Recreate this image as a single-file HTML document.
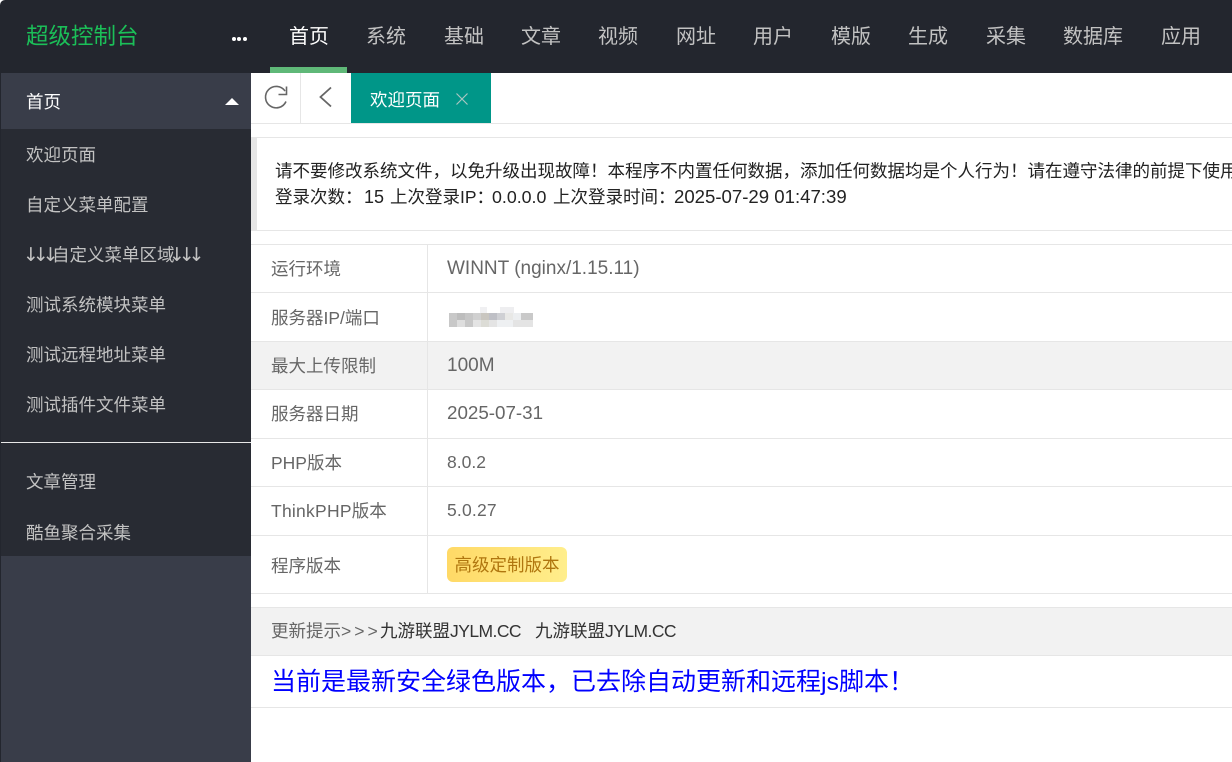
<!DOCTYPE html>
<html lang="zh-CN"><head><meta charset="utf-8"><title>超级控制台</title>
<style>
*{margin:0;padding:0;box-sizing:border-box}
html,body{width:1232px;height:762px;overflow:hidden;background:#fff}
body{font-family:"Liberation Sans","Noto Sans CJK SC",sans-serif;position:relative;font-size:17.5px}
.a{position:absolute;white-space:nowrap}
.bg{position:absolute}
.nav{position:absolute;top:1px;height:73px;line-height:72px;font-size:20px;color:#c2c2c2;white-space:nowrap}
.m{position:absolute;left:26px;font-size:17.5px;color:#c2c2c2;line-height:50px;height:50px;white-space:nowrap}
.hl{position:absolute;left:251px;width:981px;height:1px;background:#e6e6e6}
.l{position:absolute;left:271px;color:#666;white-space:nowrap;font-size:17.5px;line-height:26px}
.v{position:absolute;left:447px;color:#666;white-space:nowrap;font-size:17.5px;line-height:26px}
.n{position:absolute;color:#222;line-height:26px;font-size:17.5px;white-space:nowrap}
.ar{position:absolute;top:0;font-family:"DejaVu Sans",sans-serif;font-size:19px;letter-spacing:-6.1px}
</style></head><body>
<div class="bg" style="left:0;top:0;width:1232px;height:73px;background:#23262e"></div>
<div class="bg" style="left:1px;top:73px;width:250px;height:689px;background:#393d49"></div>
<div class="bg" style="left:0;top:0;width:1px;height:762px;background:#23262e"></div>
<div class="bg" style="left:1px;top:129px;width:250px;height:427px;background:#282b33"></div>
<div class="bg" style="left:1px;top:442px;width:250px;height:1px;background:#e8e8e8"></div>
<svg class="bg" style="left:0;top:0" width="5" height="5"><path d="M0 0H5A5 5 0 0 0 0 5Z" fill="#fff"/></svg>

<div class="a" style="left:26px;top:20px;font-size:22.5px;line-height:34px;color:#1bbf58">超级控制台</div>
<div class="bg" style="left:231.500px;top:37px;width:4px;height:4px;border-radius:50%;background:#fff"></div>
<div class="bg" style="left:237px;top:37px;width:4px;height:4px;border-radius:50%;background:#fff"></div>
<div class="bg" style="left:242.500px;top:37px;width:4px;height:4px;border-radius:50%;background:#fff"></div>

<div class="nav" style="left:289px;color:#fff">首页</div>
<div class="nav" style="left:366px">系统</div>
<div class="nav" style="left:444px">基础</div>
<div class="nav" style="left:521px">文章</div>
<div class="nav" style="left:598px">视频</div>
<div class="nav" style="left:676px">网址</div>
<div class="nav" style="left:753px">用户</div>
<div class="nav" style="left:831px">模版</div>
<div class="nav" style="left:908px">生成</div>
<div class="nav" style="left:986px">采集</div>
<div class="nav" style="left:1063px">数据库</div>
<div class="nav" style="left:1161px">应用</div>
<div class="bg" style="left:270px;top:67px;width:77px;height:6px;background:#5fb878"></div>

<div class="m" style="top:77px;color:#fff">首页</div>
<div class="bg" style="left:225px;top:98px;width:0;height:0;border-left:7px solid transparent;border-right:7px solid transparent;border-bottom:7px solid #fff"></div>
<div class="m" style="top:130px">欢迎页面</div>
<div class="m" style="top:180px">自定义菜单配置</div>
<div class="m" style="top:230px;width:180px"><span class="ar" style="left:-3px">↓↓↓</span><span style="position:absolute;left:26px;top:0">自定义菜单区域</span><span class="ar" style="left:143px">↓↓↓</span></div>
<div class="m" style="top:280px">测试系统模块菜单</div>
<div class="m" style="top:330px">测试远程地址菜单</div>
<div class="m" style="top:380px">测试插件文件菜单</div>
<div class="m" style="top:457px">文章管理</div>
<div class="m" style="top:508px">酷鱼聚合采集</div>

<div class="bg" style="left:300px;top:73px;width:1px;height:50px;background:#e6e6e6"></div>
<div class="bg" style="left:251px;top:123px;width:981px;height:1px;background:#e6e6e6"></div>
<svg class="bg" style="left:251px;top:73px" width="100" height="50" viewBox="0 0 100 50" fill="none" stroke="#666" stroke-width="1.6">
<path d="M34 18A10.700 10.700 0 1 0 35 28.500"/><path d="M35.500 13.500V21.500H27.500"/>
<path d="M80 14.500L69.500 24L80 33.500" stroke-width="1.800"/></svg>
<div class="bg" style="left:351px;top:73px;width:140px;height:50px;background:#009688"></div>
<div class="a" style="left:370px;top:87px;color:#fff;line-height:26px">欢迎页面</div>
<svg class="bg" style="left:455px;top:92px" width="14" height="14" fill="none" stroke="#a8c6c1" stroke-width="1.200"><path d="M1.500 1.500L12.500 12.500M12.500 1.500L1.500 12.500"/></svg>

<div class="hl" style="top:137px"></div>
<div class="bg" style="left:251px;top:137px;width:6px;height:94px;background:#e6e6e6"></div>
<div class="hl" style="top:230px"></div>
<div class="n" style="left:275px;top:158px">请不要修改系统文件，以免升级出现故障！本程序不内置任何数据，添加任何数据均是个人行为！请在遵守法律的前提下使用本</div>
<div class="n" style="left:275px;top:184px">登录次数：</div>
<div class="n" style="left:364px;top:184px;font-size:18px">15</div>
<div class="n" style="left:390px;top:184px">上次登录IP：</div>
<div class="n" style="left:492px;top:184px;font-size:17.800px">0.0.0.0</div>
<div class="n" style="left:553px;top:184px">上次登录时间：</div>
<div class="n" style="left:674px;top:184px;font-size:18.600px">2025-07-29 01:47:39</div>

<div class="bg" style="left:251px;top:342px;width:981px;height:47px;background:#f2f2f2"></div>
<div class="hl" style="top:244px"></div>
<div class="hl" style="top:292px"></div>
<div class="hl" style="top:341px"></div>
<div class="hl" style="top:389px"></div>
<div class="hl" style="top:438px"></div>
<div class="hl" style="top:486px"></div>
<div class="hl" style="top:535px"></div>
<div class="hl" style="top:593px"></div>
<div class="bg" style="left:427px;top:244px;width:1px;height:349px;background:#e6e6e6"></div>

<div class="l" style="top:256px">运行环境</div><div class="v" style="top:256px;font-size:19px">WINNT (nginx/1.15.11)</div>
<div class="l" style="top:305px">服务器IP/端口</div>
<div class="l" style="top:353px">最大上传限制</div><div class="v" style="top:353px;font-size:19px">100M</div>
<div class="l" style="top:401px">服务器日期</div><div class="v" style="top:400px;font-size:18.800px">2025-07-31</div>
<div class="l" style="top:450px">PHP版本</div><div class="v" style="top:449px">8.0.2</div>
<div class="l" style="top:498px"><span style="letter-spacing:.25px">ThinkPHP</span>版本</div><div class="v" style="top:497px;letter-spacing:.2px">5.0.27</div>
<div class="l" style="top:553px">程序版本</div>

<svg class="bg" style="left:449px;top:307px" width="84" height="22" shape-rendering="crispEdges">
<rect x="0" y="6" width="84" height="14" fill="#e4e4e4"/>
<rect x="0" y="6" width="8" height="14" fill="#c8c8c8"/><rect x="8" y="6" width="8" height="7" fill="#bdbdbd"/><rect x="16" y="6" width="8" height="7" fill="#c6c6c6"/><rect x="24" y="6" width="8" height="7" fill="#d0d0d0"/><rect x="32" y="6" width="8" height="7" fill="#c9c6c0"/><rect x="40" y="6" width="8" height="7" fill="#bfc0c6"/><rect x="48" y="6" width="8" height="7" fill="#cfd0d4"/><rect x="56" y="6" width="8" height="7" fill="#e8e8e6"/><rect x="64" y="6" width="8" height="7" fill="#eceef0"/><rect x="72" y="6" width="12" height="7" fill="#c9c9c9"/><rect x="8" y="13" width="8" height="7" fill="#dedede"/><rect x="16" y="13" width="8" height="7" fill="#c8c8c8"/><rect x="32" y="13" width="8" height="7" fill="#dcdcd6"/><rect x="48" y="13" width="16" height="7" fill="#eef0f2"/>
<rect x="31" y="0" width="7" height="6" fill="#f0f0f2"/><rect x="51" y="0" width="14" height="6" fill="#eeeef0"/>
</svg>

<div class="a" style="left:447px;top:547px;width:120px;height:35px;border-radius:6px;background:linear-gradient(90deg,#ffd966,#ffee8c);color:#b0760f;line-height:36px;text-align:center;font-size:17.5px">高级定制版本</div>

<div class="bg" style="left:251px;top:608px;width:981px;height:47px;background:#f2f2f2"></div>
<div class="hl" style="top:607px"></div>
<div class="hl" style="top:655px"></div>
<div class="hl" style="top:707px"></div>
<div class="a" style="left:271px;top:618px;line-height:26px;color:#666">更新提示<span style="letter-spacing:3px">&gt;&gt;&gt;</span></div>
<div class="a" style="left:380px;top:618px;line-height:26px;color:#333">九游联盟<span style="letter-spacing:-.55px">JYLM.CC</span></div>
<div class="a" style="left:535px;top:618px;line-height:26px;color:#333">九游联盟<span style="letter-spacing:-.55px">JYLM.CC</span></div>
<div class="a" style="left:271px;top:665px;line-height:34px;font-size:25px;color:#0000ff">当前是最新安全绿色版本，已去除自动更新和远程js脚本！</div>
</body></html>
